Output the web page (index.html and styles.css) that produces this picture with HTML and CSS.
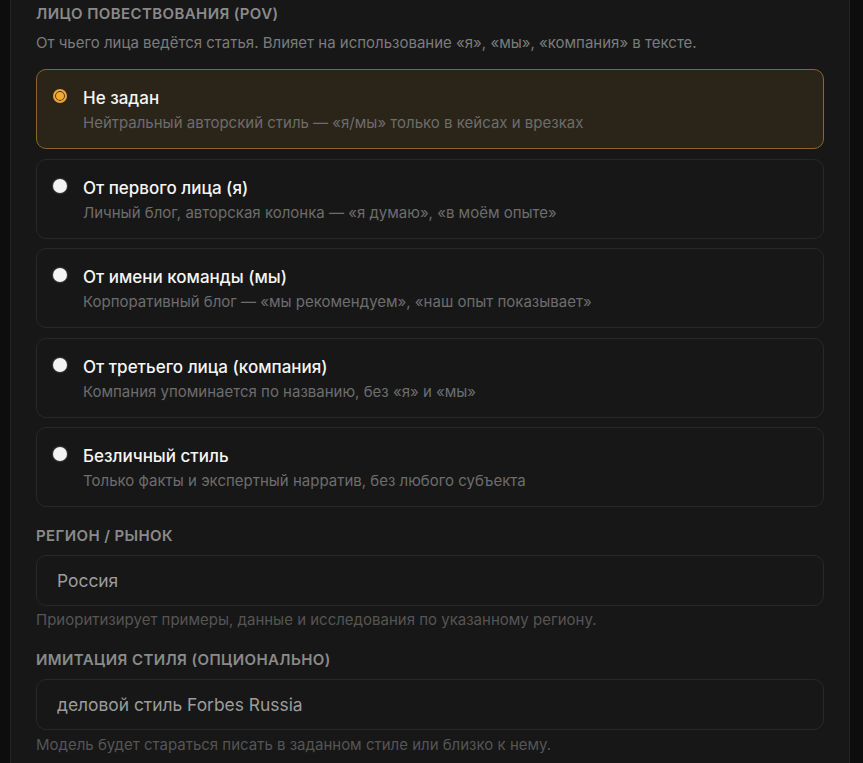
FILE: index.html
```html
<!DOCTYPE html>
<html lang="ru">
<head>
    <meta charset="utf-8">
    <meta name="viewport" content="width=device-width, initial-scale=1">
    <title>Настройки статьи</title>
    <link rel="stylesheet" href="styles.css">
</head>
<body>
    <div class="panel">
        <h3 class="label">Лицо повествования (POV)</h3>
        <p class="lead">От чьего лица ведётся статья. Влияет на использование «я», «мы», «компания» в тексте.</p>

        <div class="options">
            <label class="opt selected">
                <input type="radio" name="pov" class="radio" checked>
                <span class="opt-text">
                    <span class="opt-title">Не задан</span>
                    <span class="opt-desc">Нейтральный авторский стиль — «я/мы» только в кейсах и врезках</span>
                </span>
            </label>
            <label class="opt">
                <input type="radio" name="pov" class="radio">
                <span class="opt-text">
                    <span class="opt-title">От первого лица (я)</span>
                    <span class="opt-desc">Личный блог, авторская колонка — «я думаю», «в моём опыте»</span>
                </span>
            </label>
            <label class="opt">
                <input type="radio" name="pov" class="radio">
                <span class="opt-text">
                    <span class="opt-title">От имени команды (мы)</span>
                    <span class="opt-desc">Корпоративный блог — «мы рекомендуем», «наш опыт показывает»</span>
                </span>
            </label>
            <label class="opt">
                <input type="radio" name="pov" class="radio">
                <span class="opt-text">
                    <span class="opt-title">От третьего лица (компания)</span>
                    <span class="opt-desc">Компания упоминается по названию, без «я» и «мы»</span>
                </span>
            </label>
            <label class="opt">
                <input type="radio" name="pov" class="radio">
                <span class="opt-text">
                    <span class="opt-title">Безличный стиль</span>
                    <span class="opt-desc">Только факты и экспертный нарратив, без любого субъекта</span>
                </span>
            </label>
        </div>

        <h3 class="label sec">Регион / рынок</h3>
        <input type="text" class="field" value="Россия">
        <p class="hint">Приоритизирует примеры, данные и исследования по указанному региону.</p>

        <h3 class="label sec">Имитация стиля (опционально)</h3>
        <input type="text" class="field" value="деловой стиль Forbes Russia">
        <p class="hint">Модель будет стараться писать в заданном стиле или близко к нему.</p>
    </div>
</body>
</html>
```

FILE: styles.css
```css
body {
    margin: 0;
    background-color: #0d0d0d;
    font-family: Inter, "Noto Sans", sans-serif;
    color: #f2f2f2;
}
.panel {
    margin-left: 10px;
    width: 840px;
    height: 763px;
    box-sizing: border-box;
    padding: 4px 25px 0 25px;
    background-color: #171717;
    border-left: 1px solid #242424;
    border-right: 1px solid #242424;
    overflow: hidden;
}
.label {
    margin: 0;
    font-size: 15px;
    line-height: 20px;
    font-weight: 600;
    text-transform: uppercase;
    letter-spacing: 0.4px;
    color: #8a8a8a;
}
.label.sec {
    margin-top: 19px;
    margin-bottom: 9px;
}
.label.sec + .field + .hint + .label.sec {
    margin-top: 20px;
}
.lead {
    margin: 9px 0 16px;
    font-size: 15px;
    line-height: 20px;
    color: #7c7c7c;
}
.options {
    display: flex;
    flex-direction: column;
    gap: 9.5px;
}
.opt {
    display: flex;
    gap: 16px;
    padding: 16px 16px 14px;
    border: 1px solid #282828;
    border-radius: 10px;
    background-color: #171717;
    cursor: pointer;
}
.opt.selected {
    background-color: #2b2419;
    border-color: #86672c;
}
.radio {
    appearance: none;
    -webkit-appearance: none;
    flex: none;
    width: 14px;
    height: 14px;
    margin: 3px 0 0;
    border-radius: 50%;
    background-color: #f4f4f4;
    box-shadow: 0 0 1px 1px #3a3a3a;
}
.radio:checked {
    background-color: #f5a932;
    border: 2px solid #e8a53c;
    box-shadow: inset 0 0 0 1px #3a2d18;
}
.opt-text {
    display: flex;
    flex-direction: column;
    gap: 2px;
}
.opt-title {
    font-size: 17px;
    line-height: 24px;
    font-weight: 500;
    color: #f5f5f5;
}
.opt-desc {
    font-size: 15px;
    line-height: 22px;
    color: #6d6d6d;
}
.field {
    display: block;
    width: 100%;
    box-sizing: border-box;
    height: 51px;
    padding: 0 20px;
    border: 1px solid #282828;
    border-radius: 10px;
    background-color: #171717;
    font-family: inherit;
    font-size: 17.4px;
    color: #9c9c9c;
    outline: none;
}
.hint {
    margin: 4px 0 0;
    font-size: 15px;
    line-height: 20px;
    color: #555555;
}
.field + .hint:last-child {
    margin-top: 5px;
}
```
